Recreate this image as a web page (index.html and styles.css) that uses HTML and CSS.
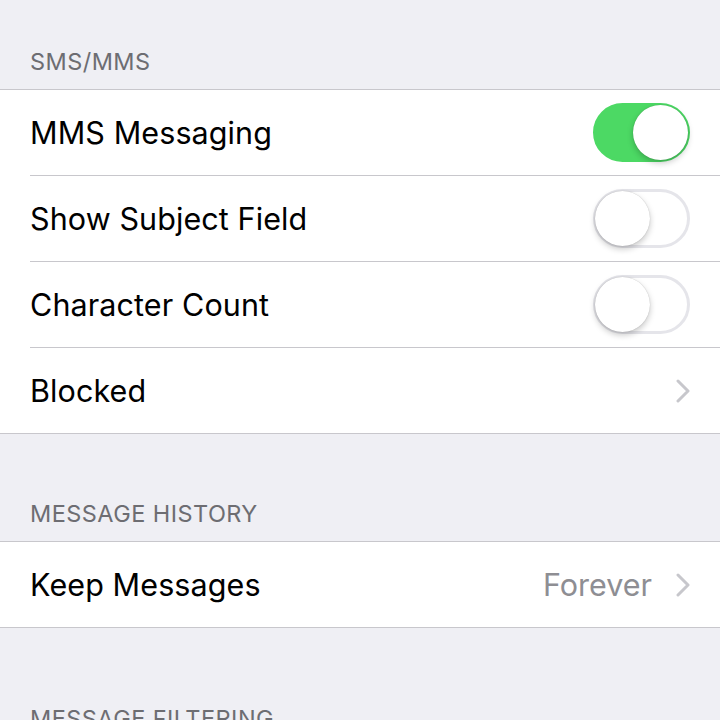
FILE: index.html
```html
<!DOCTYPE html>
<html>
<head>
<meta charset="utf-8">
<link rel="stylesheet" href="styles.css">
</head>
<body>
<div class="page">
  <div class="section-header first">SMS/MMS</div>
  <div class="group">
    <div class="row">
      <div class="row-inner">
        <span class="label">MMS Messaging</span>
        <span class="switch on"><span class="knob"></span></span>
      </div>
    </div>
    <div class="row">
      <div class="row-inner">
        <span class="label">Show Subject Field</span>
        <span class="switch"><span class="knob"></span></span>
      </div>
    </div>
    <div class="row">
      <div class="row-inner">
        <span class="label">Character Count</span>
        <span class="switch"><span class="knob"></span></span>
      </div>
    </div>
    <div class="row">
      <div class="row-inner last">
        <span class="label">Blocked</span>
        <span class="accessory">
          <svg class="chevron" width="14" height="24" viewBox="0 0 14 24"><path d="M2 2 L12 12 L2 22" fill="none" stroke="#c7c7cc" stroke-width="3" stroke-linecap="round" stroke-linejoin="round"/></svg>
        </span>
      </div>
    </div>
  </div>
  <div class="section-header">MESSAGE HISTORY</div>
  <div class="group">
    <div class="row">
      <div class="row-inner last">
        <span class="label">Keep Messages</span>
        <span class="accessory">
          <span class="value">Forever</span>
          <svg class="chevron" width="14" height="24" viewBox="0 0 14 24"><path d="M2 2 L12 12 L2 22" fill="none" stroke="#c7c7cc" stroke-width="3" stroke-linecap="round" stroke-linejoin="round"/></svg>
        </span>
      </div>
    </div>
  </div>
  <div class="section-header tail">MESSAGE FILTERING</div>
</div>
</body>
</html>
```
FILE: styles.css
```css
html, body {
  margin: 0;
  padding: 0;
  background: #efeff4;
}
.page {
  width: 720px;
  height: 720px;
  overflow: hidden;
  background: #efeff4;
  font-family: "Inter", "Liberation Sans", sans-serif;
}
.section-header {
  height: 107px;
  box-sizing: border-box;
  padding: 0 30px 13px 30px;
  display: flex;
  align-items: flex-end;
  font-size: 23.5px;
  color: #6d6d72;
  letter-spacing: 0.45px;
  white-space: nowrap;
}
.section-header.first {
  height: 89px;
}
.section-header.tail {
  height: 118px;
}
.group {
  background: #fff;
  border-top: 1px solid #c8c7cc;
  border-bottom: 1px solid #c8c7cc;
}
.row {
  padding-left: 30px;
}
.row-inner {
  height: 85px;
  display: flex;
  align-items: center;
  justify-content: space-between;
  padding-right: 30px;
  border-bottom: 1px solid #c8c7cc;
}
.row-inner.last {
  border-bottom: none;
}
.label {
  font-size: 30.5px;
  color: #000;
  letter-spacing: 0.1px;
}
.accessory {
  display: flex;
  align-items: center;
  gap: 24px;
}
.value {
  font-size: 30.5px;
  color: #8e8e93;
}
.chevron {
  display: block;
}
.switch {
  width: 97px;
  height: 59px;
  box-sizing: border-box;
  border-radius: 30px;
  border: 3px solid #e5e5ea;
  background: #fff;
  position: relative;
  display: block;
}
.switch.on {
  background: #4cd964;
  border-color: #4cd964;
}
.knob {
  position: absolute;
  top: -1px;
  left: -1px;
  width: 55px;
  height: 55px;
  border-radius: 50%;
  background: #fff;
  box-shadow: 0 3px 6px rgba(0,0,0,0.22), 0 0 1px rgba(0,0,0,0.25);
}
.switch.on .knob {
  left: auto;
  right: -1px;
}
```
